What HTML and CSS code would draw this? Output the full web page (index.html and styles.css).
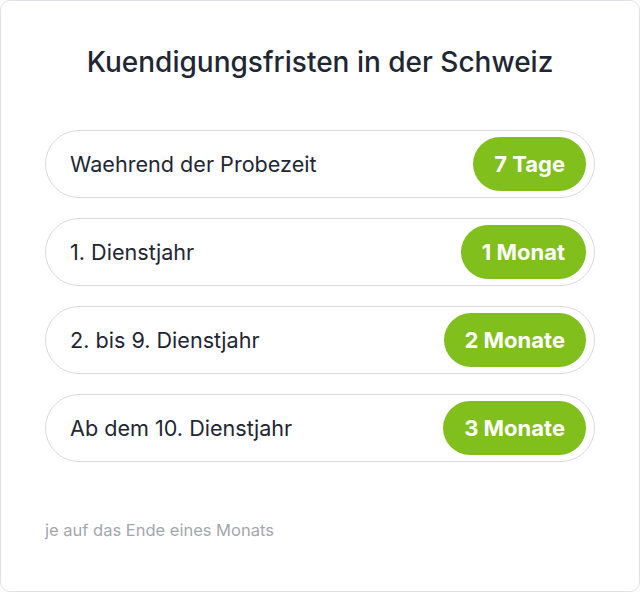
FILE: index.html
```html
<!DOCTYPE html>
<html lang="de">
<head>
<meta charset="utf-8">
<link rel="stylesheet" href="styles.css">
</head>
<body>
<div class="card">
  <h1 class="title">Kuendigungsfristen in der Schweiz</h1>
  <div class="list">
    <div class="row"><span class="label">Waehrend der Probezeit</span><span class="badge">7 Tage</span></div>
    <div class="row"><span class="label">1. Dienstjahr</span><span class="badge">1 Monat</span></div>
    <div class="row"><span class="label">2. bis 9. Dienstjahr</span><span class="badge">2 Monate</span></div>
    <div class="row"><span class="label">Ab dem 10. Dienstjahr</span><span class="badge">3 Monate</span></div>
  </div>
  <p class="note">je auf das Ende eines Monats</p>
</div>
</body>
</html>
```
FILE: styles.css
```css
html, body {
  margin: 0;
  padding: 0;
  background: #ffffff;
}
body {
  font-family: Inter, "Noto Sans", sans-serif;
  color: #1f2733;
}
.card {
  box-sizing: border-box;
  width: 640px;
  height: 592px;
  border: 1px solid #dfe2e8;
  border-radius: 10px;
  background: #ffffff;
  padding: 43px 44px 0 44px;
}
.title {
  margin: 0;
  font-size: 28px;
  line-height: 36px;
  font-weight: 500;
  text-align: center;
  color: #1f2733;
}
.list {
  margin-top: 50px;
  display: flex;
  flex-direction: column;
  gap: 20px;
}
.row {
  display: flex;
  align-items: center;
  justify-content: space-between;
  height: 68px;
  box-sizing: border-box;
  border: 1px solid #d8dbe2;
  border-radius: 34px;
  padding: 0 8px 0 24px;
}
.label {
  font-size: 21.6px;
  font-weight: 400;
  color: #1f2733;
}
.badge {
  display: flex;
  align-items: center;
  height: 54px;
  box-sizing: border-box;
  padding: 0 21px;
  border-radius: 27px;
  background: #80bf1c;
  color: #ffffff;
  font-size: 22px;
  font-weight: 700;
}
.note {
  margin: 56px 0 0 0;
  font-size: 16.5px;
  line-height: 24px;
  font-weight: 400;
  color: #a3a7ae;
}
```
